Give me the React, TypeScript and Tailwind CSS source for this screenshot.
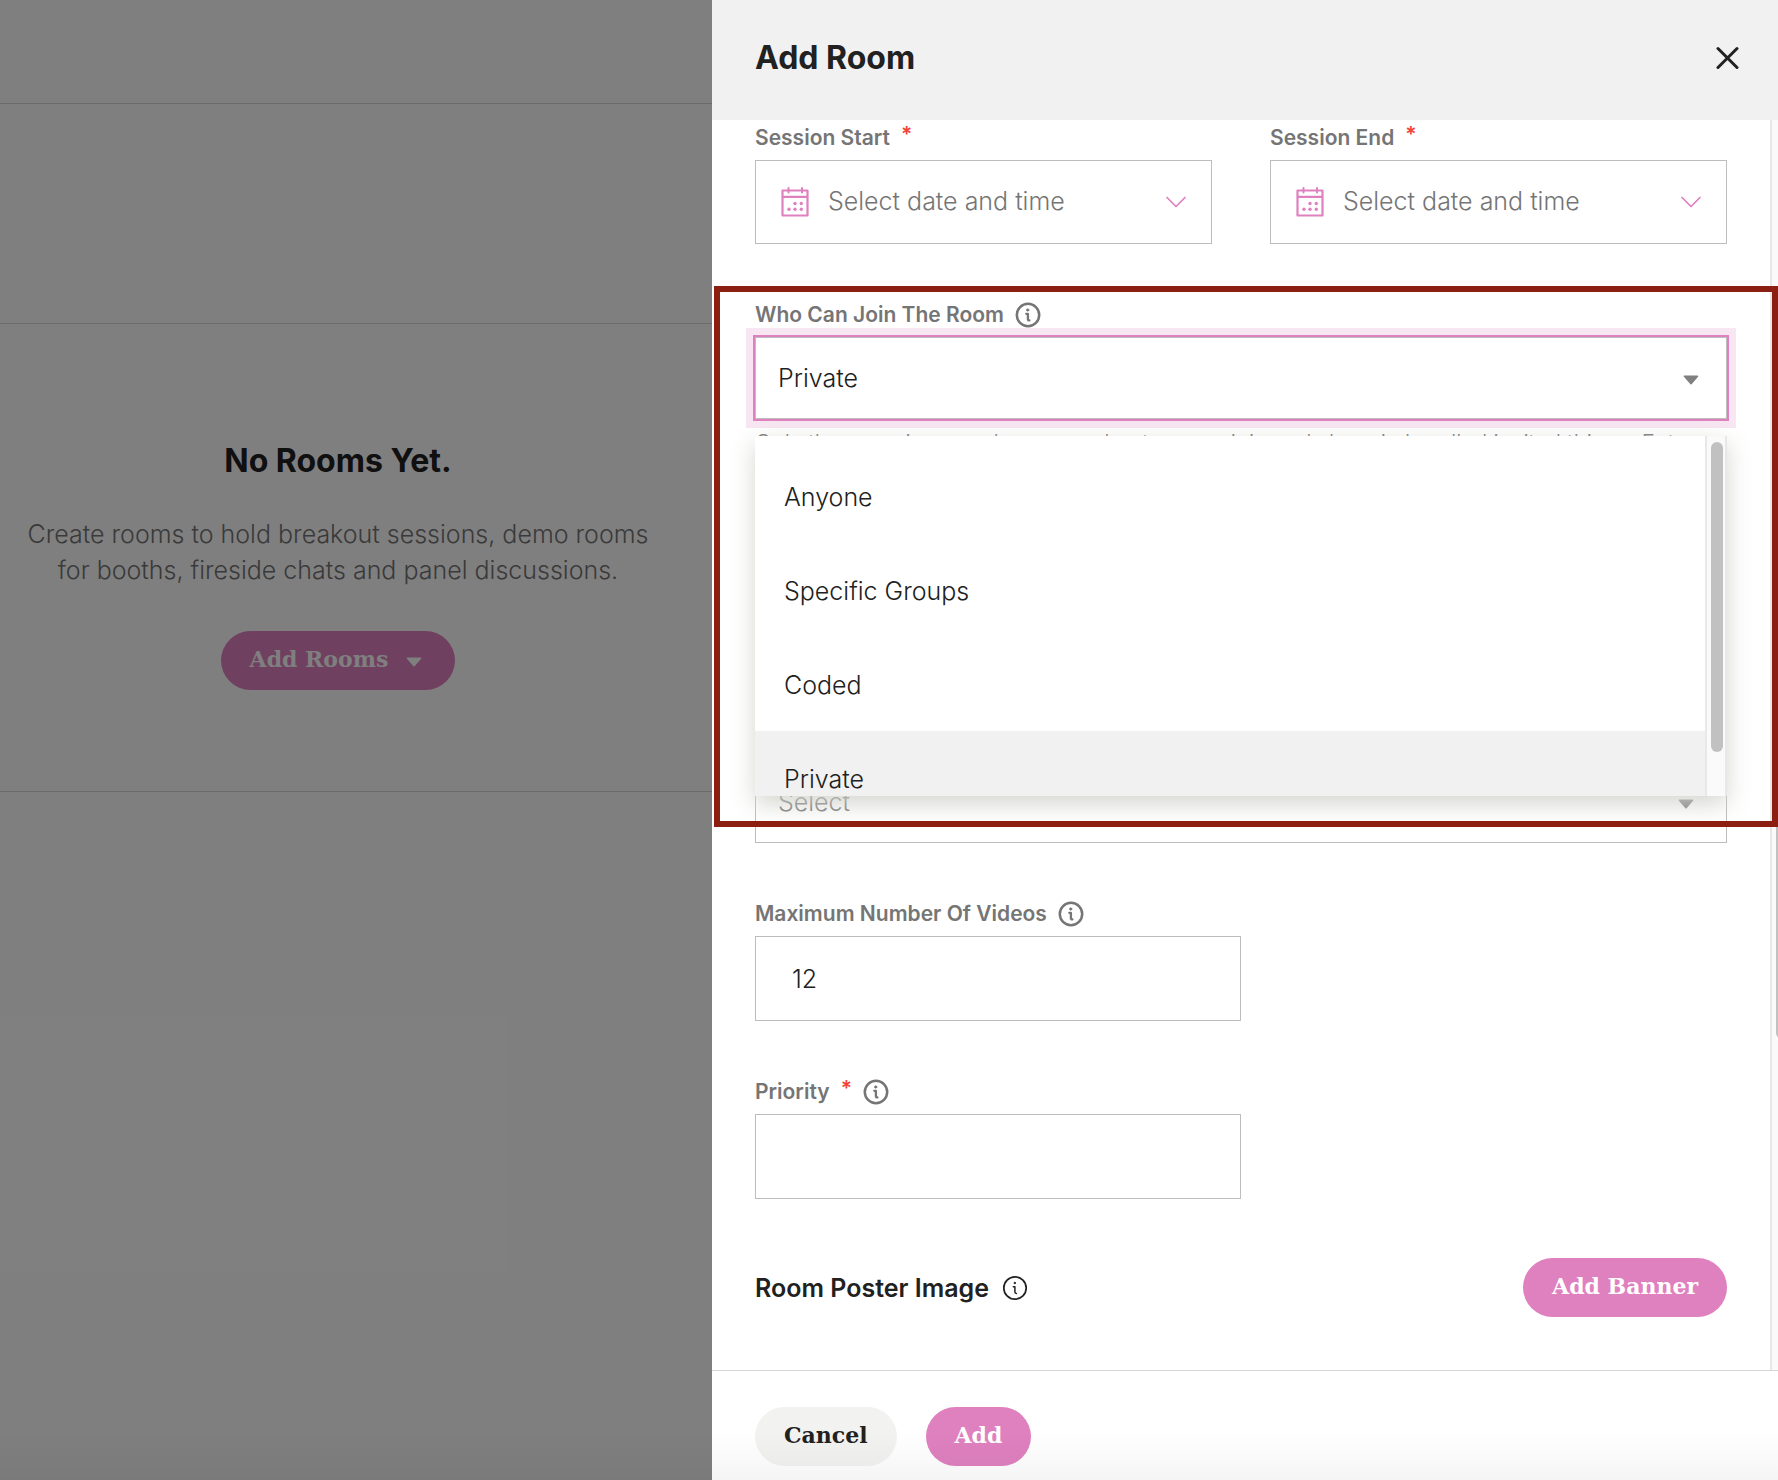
import type { ReactNode } from "react"
import clsx from "clsx"

const roomOptions = ["Anyone", "Specific Groups", "Coded", "Private"]

function InfoIcon({ thin = false }: { thin?: boolean }) {
  return (
    <svg
      viewBox="0 0 26 26"
      className="size-[26px] shrink-0"
      fill="none"
      stroke="currentColor"
      strokeWidth={thin ? 1.7 : 2.5}
      strokeLinecap="round"
      strokeLinejoin="round"
      aria-hidden="true"
    >
      <circle cx="13" cy="13" r="11.2" />
      <circle cx="12.7" cy="8" r={thin ? 0.7 : 1.1} fill="currentColor" strokeWidth="1" />
      <path d="M11.3 11.8h1.6v5.2q0 1.4 1.5 1.4" strokeWidth={thin ? 1.5 : 2.3} />
    </svg>
  )
}

function CalendarIcon() {
  return (
    <svg viewBox="0 0 28 30" className="h-[30px] w-7 shrink-0 text-[#df80bf]" fill="none" stroke="currentColor" aria-hidden="true">
      <path d="M1.5 3.5h25v25h-25zM1.5 9.8h25" strokeWidth="2.2" strokeLinejoin="round" />
      <path d="M7.5 1v4.6M21 1v4.6" strokeWidth="2" strokeLinecap="round" />
      <g fill="currentColor" stroke="none">
        <circle cx="14" cy="16.5" r="1.7" />
        <circle cx="20.3" cy="16.5" r="1.7" />
        <circle cx="8" cy="22.2" r="1.7" />
        <circle cx="14" cy="22.2" r="1.7" />
        <circle cx="20.3" cy="22.2" r="1.7" />
      </g>
    </svg>
  )
}

function Caret() {
  return (
    <svg viewBox="0 0 16 10" className="h-[10px] w-4 shrink-0" fill="currentColor" stroke="currentColor" strokeLinejoin="round" aria-hidden="true">
      <path d="M1.5 1.2h13L8 8.6z" strokeWidth="1.6" />
    </svg>
  )
}

function FieldLabel({ htmlFor, required, info, children }: { htmlFor: string; required?: boolean; info?: boolean; children: ReactNode }) {
  return (
    <div className="mb-[10px] flex h-6 items-center text-[21px] leading-6 font-semibold text-[#757575]">
      <label htmlFor={htmlFor} className="flex">
        {children}
        {required && <span className="ml-[11px] leading-[18px] text-[#f44336]">*</span>}
      </label>
      {info && (
        <button type="button" aria-label="More info" className="ml-[11px]">
          <InfoIcon />
        </button>
      )}
    </div>
  )
}

function DateField({ id, label }: { id: string; label: string }) {
  return (
    <div className="min-w-0 flex-1">
      <FieldLabel htmlFor={id} required>{label}</FieldLabel>
      <div className="flex h-[84px] items-center border border-[#bdbdbd] px-[25px] pb-px">
        <CalendarIcon />
        <input
          id={id}
          readOnly
          placeholder="Select date and time"
          className="ml-[19px] min-w-0 flex-1 bg-transparent text-[25px] font-light outline-none placeholder:text-[#757575]"
        />
        <svg viewBox="0 0 20 12" className="h-3 w-5 shrink-0 text-[#df80bf]" fill="none" stroke="currentColor" strokeWidth="1.7" strokeLinecap="round" strokeLinejoin="round" aria-hidden="true">
          <path d="M1 1.5l9 9 9-9" />
        </svg>
      </div>
    </div>
  )
}

function PillButton({ variant = "primary", children }: { variant?: "primary" | "muted"; children: ReactNode }) {
  return (
    <button
      type="button"
      className={clsx(
        "flex h-[59px] items-center rounded-full px-[29px] pb-[2px] font-['DejaVu_Serif',serif] text-[22px] font-bold",
        variant === "primary" ? "bg-[#df80bf] text-white" : "bg-[#f2f2f0] text-[#212121]"
      )}
    >
      {children}
    </button>
  )
}

function RoomsPage() {
  return (
    <section className="relative flex flex-col overflow-hidden bg-white">
      <div className="h-[104px] border-b border-[#d6d6d6]" />
      <div className="h-[220px] border-b border-[#d6d6d6]" />
      <div className="flex h-[468px] flex-col items-center border-b border-[#d6d6d6] pt-[117px] pr-9 text-center">
        <h2 className="text-[32px] leading-10 font-bold text-[#212121]">No Rooms Yet.</h2>
        <p className="mt-[35px] text-[25px] leading-9 font-light text-[#757575]">
          Create rooms to hold breakout sessions, demo rooms
          <br />
          for booths, fireside chats and panel discussions.
        </p>
        <div className="mt-[43px]">
          <PillButton>
            Add Rooms
            <span className="mr-1 ml-[18px] pt-1"><Caret /></span>
          </PillButton>
        </div>
      </div>
      {/* backdrop */}
      <div className="absolute inset-0 bg-black/50" />
    </section>
  )
}

function RoomAccessField() {
  return (
    <div className="relative min-h-[397px]">
      <FieldLabel htmlFor="access" info>Who Can Join The Room</FieldLabel>
      <div className="relative">
        <select
          id="access"
          defaultValue="Private"
          className="block h-[82px] w-full appearance-none border border-[#bdbdbd] bg-white pt-[2px] pr-16 pl-[22px] text-[25px] font-light text-[#212121] shadow-[0_0_0_2px_#df80bf,0_0_0_9px_#f8e6f2] outline-none"
        >
          {roomOptions.map((option) => (
            <option key={option}>{option}</option>
          ))}
        </select>
        <span className="pointer-events-none absolute inset-y-0 right-7 flex items-center pt-1 text-[#808080]"><Caret /></span>
      </div>
      <p className="mt-[9px] text-[22px] leading-7 font-light text-[#757575]">
        Only the organizers and room moderators can join and share in handled invited things. Enter the addi
      </p>
      <div className="absolute inset-x-0 top-[133px] z-10 flex h-[360px] overflow-hidden bg-white shadow-[0_8px_22px_rgba(208,208,202,0.9)]">
        <ul role="listbox" aria-label="Who Can Join The Room" className="flex-1 pt-[13px]">
          {roomOptions.map((option) => (
            <li
              key={option}
              role="option"
              aria-selected={option === "Private"}
              className={clsx("flex h-[94px] items-center px-[29px] pt-[3px] text-[25px] font-light text-[#212121]", option === "Private" && "bg-[#f1f1f1]")}
            >
              {option}
            </li>
          ))}
        </ul>
        <div className="w-[22px] border-x-2 border-[#e8e8e8] bg-[#fafafa] px-1 pt-[6px]">
          <div className="h-[310px] w-3 rounded-full bg-[#c1c1c1]" />
        </div>
      </div>
    </div>
  )
}

function AddRoomPanel() {
  return (
    <section role="dialog" aria-labelledby="panel-title" className="relative flex min-h-0 min-w-0 flex-col bg-white">
      <header className="flex h-[120px] shrink-0 items-center justify-between bg-[#f1f1f1] pr-[39px] pb-1 pl-[43px]">
        <h1 id="panel-title" className="text-[32px] leading-10 font-bold text-[#212121]">Add Room</h1>
        <button type="button" aria-label="Close" className="text-[#212121]">
          <svg viewBox="0 0 24 24" className="size-6" fill="none" stroke="currentColor" strokeWidth="3" strokeLinecap="round" aria-hidden="true">
            <path d="M3 2.5l19 19M22 2.5l-19 19" />
          </svg>
        </button>
      </header>

      <div className="flex min-h-0 flex-1 overflow-hidden">
        <form className="flex min-w-0 flex-1 flex-col gap-[59px] px-[43px] pt-[6px]">
          <div className="flex gap-[58px]">
            <DateField id="session-start" label="Session Start" />
            <DateField id="session-end" label="Session End" />
          </div>

          <RoomAccessField />

          <div className="relative">
            <select
              aria-label="Select"
              className="block h-[84px] w-full appearance-none border border-[#bdbdbd] bg-white pt-[3px] pr-16 pl-[22px] text-[25px] font-light text-[#757575] outline-none"
            >
              <option>Select</option>
            </select>
            <span className="pointer-events-none absolute inset-y-0 right-[33px] flex items-center pt-[6px] text-[#808080]"><Caret /></span>
          </div>

          <div>
            <FieldLabel htmlFor="max-videos" info>Maximum Number Of Videos</FieldLabel>
            <input
              id="max-videos"
              defaultValue="12"
              className="block h-[85px] w-1/2 border border-[#bdbdbd] px-9 text-[25px] font-light text-[#212121] outline-none"
            />
          </div>

          <div>
            <FieldLabel htmlFor="priority" required info>Priority</FieldLabel>
            <input
              id="priority"
              className="block h-[85px] w-1/2 border border-[#bdbdbd] px-9 text-[25px] font-light text-[#212121] outline-none"
            />
          </div>

          <div className="flex items-center justify-between">
            <div className="flex items-center gap-[13px] text-[#212121]">
              <h2 className="text-[25px] leading-8 font-semibold">Room Poster Image</h2>
              <InfoIcon thin />
            </div>
            <PillButton>Add Banner</PillButton>
          </div>
        </form>

        {/* scroll track, its thumb runs off the window edge */}
        <div className="w-2 shrink-0 overflow-hidden border-l-2 border-[#e8e8e8] bg-[#fafafa] pt-[607px] pl-1">
          <div className="h-[312px] w-3 rounded-full bg-[#c1c1c1]" />
        </div>
      </div>

      <footer className="flex h-[110px] shrink-0 gap-[29px] border-t border-[#d6d6d6] px-[43px] pt-9">
        <PillButton variant="muted">Cancel</PillButton>
        <PillButton>Add</PillButton>
      </footer>

      <div className="pointer-events-none absolute top-[286px] right-0 left-[2px] z-20 h-[541px] border-6 border-[#8a1f12]" />
    </section>
  )
}

export default function App() {
  return (
    <main className="relative grid h-screen grid-cols-[712fr_1066fr] grid-rows-[minmax(0,1fr)] overflow-hidden font-[Inter,sans-serif]">
      <RoomsPage />
      <AddRoomPanel />
      <div className="pointer-events-none absolute inset-x-0 bottom-0 z-30 h-12 bg-linear-to-t from-black/4 to-transparent" />
    </main>
  )
}
